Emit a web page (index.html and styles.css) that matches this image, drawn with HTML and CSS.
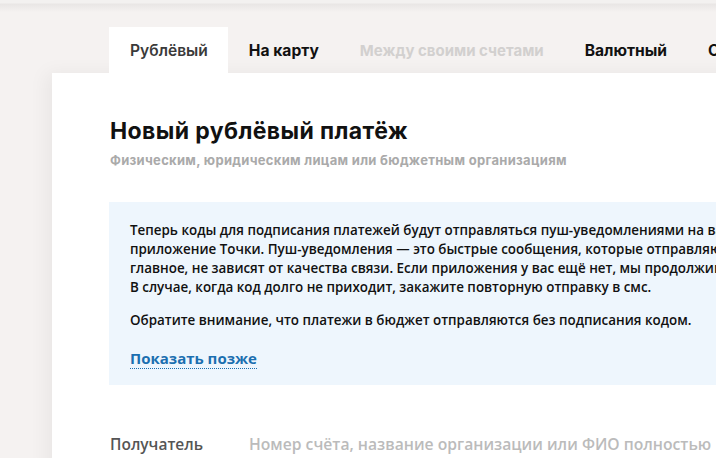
FILE: index.html
```html
<!DOCTYPE html>
<html lang="ru">
<head>
  <meta charset="UTF-8">
  <title>Новый рублёвый платёж</title>
  <link rel="stylesheet" href="styles.css">
</head>
<body>
  <div class="topbar"></div>
  <div class="page">
    <!-- Вкладки типов платежа -->
    <nav class="tabs">
      <a class="tab active">Рублёвый</a>
      <a class="tab">На карту</a>
      <a class="tab disabled">Между своими счетами</a>
      <a class="tab">Валютный</a>
      <a class="tab">Outros</a>
    </nav>

    <div class="card">
      <h1 class="title">Новый рублёвый платёж</h1>
      <p class="subtitle">Физическим, юридическим лицам или бюджетным организациям</p>

      <div class="notice">
        <p>Теперь коды для подписания платежей будут отправляться пуш-уведомлениями на ваш телефон через<br>
          приложение Точки. Пуш-уведомления — это быстрые сообщения, которые отправляются мгновенно и,<br>
          главное, не зависят от качества связи. Если приложения у вас ещё нет, мы продолжим присылать смс.<br>
          В случае, когда код долго не приходит, закажите повторную отправку в смс.</p>
        <p>Обратите внимание, что платежи в бюджет отправляются без подписания кодом.</p>
        <a class="later">Показать позже</a>
      </div>

      <div class="field">
        <span class="field-label">Получатель</span>
        <span class="field-input">Номер счёта, название организации или ФИО полностью</span>
      </div>
    </div>
  </div>
</body>
</html>
```

FILE: styles.css
```css
* {
  box-sizing: border-box;
}

body {
  margin: 0;
  background-color: #f5f2f1;
  color: #111;
  font-family: "Open Sans", sans-serif;
  overflow: hidden;
  height: 458px;
}

/* Тень от шапки сверху */
.topbar {
  height: 12px;
  background: linear-gradient(#f3f1f0 0, #f3f1f0 3px, #e9e6e5 4px, #f5f2f1 12px);
}

.page {
  padding-left: 52px;
}

/* Вкладки */
.tabs {
  display: flex;
  margin: 15px 0 0 57px;
  height: 46px;
  white-space: nowrap;
}

.tab {
  padding: 2px 20px 0 21px;
  line-height: 44px;
  font-family: Inter, sans-serif;
  font-size: 15.6px;
  font-weight: 700;
  color: #111;
}

.tab.active {
  background: #fff;
  color: #3a3a3a;
  font-weight: 600;
}

.tab.disabled {
  font-size: 15px;
  color: #d2d0cf;
}

/* Белая карточка */
.card {
  width: 760px;
  height: 400px;
  background: #fff;
  box-shadow: -6px 0 18px rgba(0, 0, 0, 0.05);
  padding: 43px 0 0 58px;
}

.title {
  margin: 0;
  font-family: Inter, sans-serif;
  font-size: 23px;
  font-weight: 700;
  letter-spacing: 0.4px;
  line-height: 30px;
}

.subtitle {
  margin: 6px 0 0;
  font-family: Inter, sans-serif;
  font-size: 13px;
  font-weight: 700;
  letter-spacing: 0.3px;
  color: #aaa;
}

/* Голубой блок с уведомлением */
.notice {
  margin: 34px 0 0 -1px;
  background: #eef6fd;
  padding: 19px 21px 16px;
  font-size: 13.4px;
  font-weight: 600;
  line-height: 19px;
  color: #111;
  white-space: nowrap;
  overflow: hidden;
}

.notice p {
  margin: 0 0 14px;
}

.later {
  display: inline-block;
  margin-top: 4px;
  line-height: 20px;
  color: #1b6fb0;
  font-size: 15px;
  font-weight: 700;
  border-bottom: 1px dotted #1b6fb0;
}

.field {
  display: flex;
  align-items: baseline;
  margin-top: 49px;
  line-height: 20px;
  white-space: nowrap;
}

.field-label {
  width: 139px;
  color: #555;
  font-size: 15.5px;
  font-weight: 600;
}

.field-input {
  color: #bbb;
  font-size: 15.7px;
  font-weight: 600;
}
```
